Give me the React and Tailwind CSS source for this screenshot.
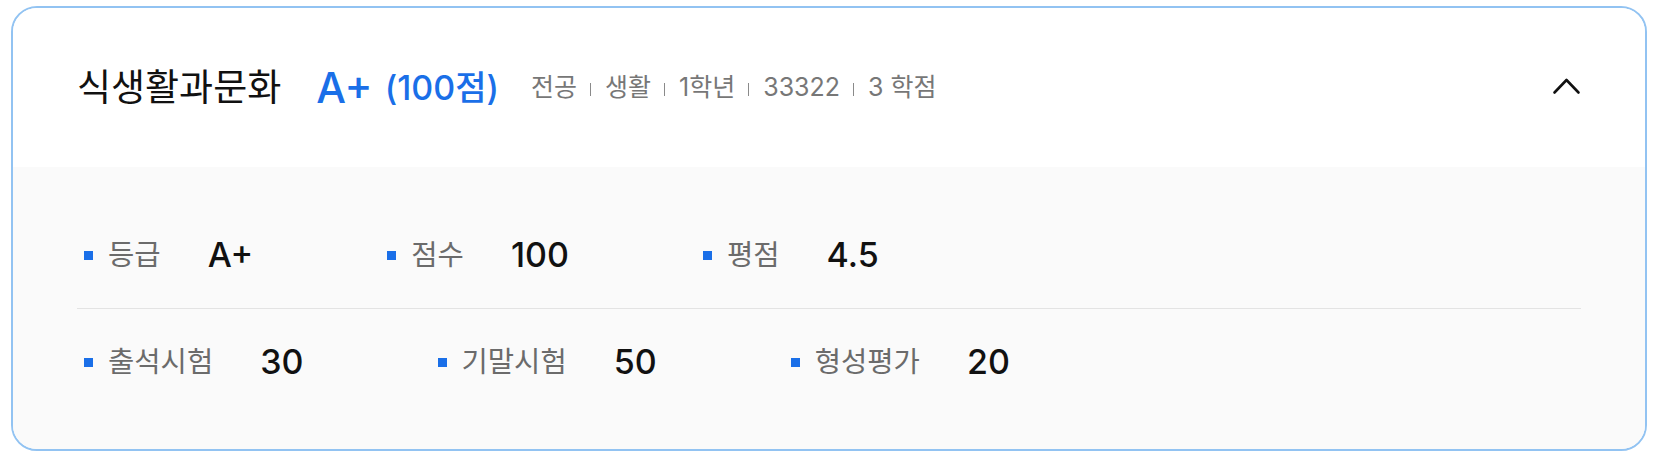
import React from "react";

const font = { fontFamily: "Inter, 'Noto Sans CJK KR', sans-serif" };

const meta = ["전공", "생활", "1학년", "33322", "3 학점"];

const rows = [
	[
		{ label: "등급", value: "A+" },
		{ label: "점수", value: "100" },
		{ label: "평점", value: "4.5" }
	],
	[
		{ label: "출석시험", value: "30" },
		{ label: "기말시험", value: "50" },
		{ label: "형성평가", value: "20" }
	]
];

const Item = ({ label, value }) => (
	<div className="flex items-center">
		<span className="w-[9px] h-[9px] bg-[#1a6fe8]"></span>
		<span className="ml-[15px] text-[28.6px] leading-none text-[#6b6b6b]">
			{label}
		</span>
		<span className="ml-[47px] text-[34px] leading-none font-medium text-[#111]">
			{value}
		</span>
	</div>
);

const App = () => {
	return (
		<div className="w-full h-[472px] bg-white pt-[6px] px-[11px]" style={font}>
			<div className="border-2 border-[#92c3f2] rounded-[26px] overflow-hidden">
				{/* header */}
				<div className="flex items-center justify-between h-[159px] pl-16 pr-[62px] bg-white">
					<div className="flex items-center">
						<span className="text-[37px] leading-none text-[#111]">
							식생활과문화
						</span>
						<span className="ml-[35px] text-[42px] leading-none font-medium text-[#1a6fe8]">
							A+
						</span>
						<span className="ml-[12px] text-[34px] leading-none font-medium text-[#1a6fe8]">
							(100점)
						</span>
						<div className="ml-8 flex items-center text-[25px] leading-none text-[#777]">
							{meta.map((m, i) => (
								<span key={m} className="flex items-center">
									{i > 0 && (
										<span className="ml-[13px] mr-[14px] w-px h-[13px] translate-y-[2px] bg-[#8a8a8a]"></span>
									)}
									{m}
								</span>
							))}
						</div>
					</div>
					<svg width="32" height="32" viewBox="0 0 32 32" fill="none">
						<polyline
							points="3.5,20.5 15.5,8 27.5,20.5"
							stroke="#111"
							strokeWidth="2.6"
							strokeLinecap="round"
							strokeLinejoin="round"
						/>
					</svg>
				</div>

				{/* details */}
				<div className="bg-[#fafafa] px-16 pt-[68px] pb-[67px]">
					<div className="flex items-center h-10 gap-x-[134px] pl-[7px]">
						{rows[0].map((it) => (
							<Item key={it.label} {...it} />
						))}
					</div>
					<div className="mt-[33px] mb-[33px] h-px bg-[#e3e3e3]"></div>
					<div className="flex items-center h-10 gap-x-[134px] pl-[7px]">
						{rows[1].map((it) => (
							<Item key={it.label} {...it} />
						))}
					</div>
				</div>
			</div>
		</div>
	);
};

export default App;
